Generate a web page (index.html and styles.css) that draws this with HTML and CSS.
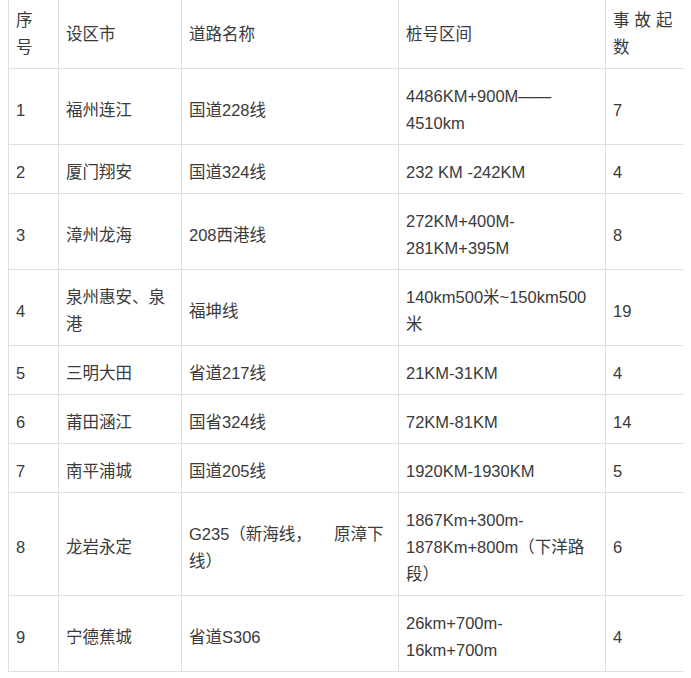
FILE: index.html
```html
<!DOCTYPE html>
<html lang="zh-CN">
<head>
<meta charset="utf-8">
<title>事故路段</title>
<link rel="stylesheet" href="styles.css">
</head>
<body>
<table class="grid">
  <colgroup>
    <col class="c1"><col class="c2"><col class="c3"><col class="c4"><col class="c5">
  </colgroup>
  <thead>
    <tr>
      <th>序<br>号</th>
      <th>设区市</th>
      <th>道路名称</th>
      <th>桩号区间</th>
      <th class="spread">事故起<br>数</th>
    </tr>
  </thead>
  <tbody>
    <tr><td>1</td><td>福州连江</td><td>国道228线</td><td>4486KM+900M——<br>4510km</td><td>7</td></tr>
    <tr><td>2</td><td>厦门翔安</td><td>国道324线</td><td>232 KM -242KM</td><td>4</td></tr>
    <tr><td>3</td><td>漳州龙海</td><td>208西港线</td><td>272KM+400M-<br>281KM+395M</td><td>8</td></tr>
    <tr><td>4</td><td>泉州惠安、泉<br>港</td><td>福坤线</td><td>140km500米~150km500<br>米</td><td>19</td></tr>
    <tr><td>5</td><td>三明大田</td><td>省道217线</td><td>21KM-31KM</td><td>4</td></tr>
    <tr><td>6</td><td>莆田涵江</td><td>国省324线</td><td>72KM-81KM</td><td>14</td></tr>
    <tr><td>7</td><td>南平浦城</td><td>国道205线</td><td>1920KM-1930KM</td><td>5</td></tr>
    <tr><td>8</td><td>龙岩永定</td><td>G235（新海线，<span class="gap"></span>原漳下<br>线）</td><td>1867Km+300m-<br>1878Km+800m（下洋路<br>段）</td><td>6</td></tr>
    <tr><td>9</td><td>宁德蕉城</td><td>省道S306</td><td>26km+700m-<br>16km+700m</td><td>4</td></tr>
  </tbody>
</table>
</body>
</html>
```

FILE: styles.css
```css
html, body {
  background: #ffffff;
}
body {
  margin: 0 8px;
  font-family: "Liberation Sans", "Noto Sans CJK SC", sans-serif;
  font-size: 16.5px;
  color: #3a3a3a;
}
.grid {
  width: 675px;
  table-layout: fixed;
  border-collapse: collapse;
}
.c1 { width: 50px; }
.c2 { width: 123px; }
.c3 { width: 217px; }
.c4 { width: 207px; }
.c5 { width: 78px; }
.grid th,
.grid td {
  border: 1px solid #dedede;
  padding: 14px 7px 7px;
  line-height: 27px;
  text-align: left;
  vertical-align: middle;
  font-weight: normal;
  white-space: nowrap;
}
.grid thead th {
  border-top: none;
  padding-top: 7px;
}
.grid th.spread {
  letter-spacing: 5px;
}
.gap {
  display: inline-block;
  width: 22px;
}
```
